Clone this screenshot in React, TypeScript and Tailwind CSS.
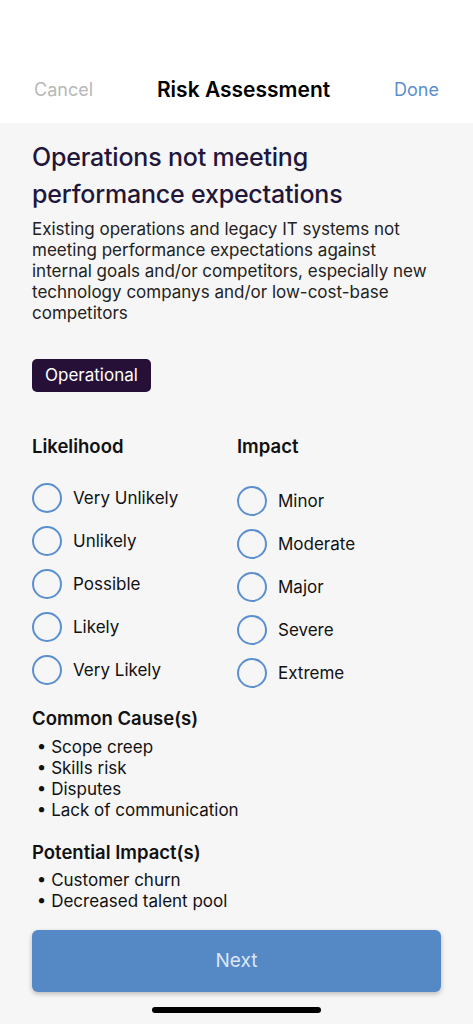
import React from "react";

const likelihood = ["Very Unlikely", "Unlikely", "Possible", "Likely", "Very Likely"];
const impact = ["Minor", "Moderate", "Major", "Severe", "Extreme"];

function Radio({ label }: { label: string }) {
  return (
    <div className="flex h-[43px] items-center gap-[11px]">
      <span className="h-[30px] w-[30px] shrink-0 rounded-full border-[2.5px] border-[#5b8fd0]" />
      <span className="text-[17px] text-[#111]">{label}</span>
    </div>
  );
}

export default function App() {
  return (
    <div
      className="relative flex h-[1024px] w-[473px] flex-col overflow-hidden bg-[#f6f6f6]"
      style={{ fontFamily: "Inter, 'Noto Sans', sans-serif" }}
    >
      <header className="flex h-[123px] items-end bg-white px-[34px] pb-[18px]">
        <div className="flex w-full items-center justify-between">
          <span className="text-[18px] text-[#b8b8b8]">Cancel</span>
          <span className="text-[21px] font-semibold text-black">Risk Assessment</span>
          <span className="text-[18px] text-[#5b8fd0]">Done</span>
        </div>
      </header>

      <main className="flex flex-col px-8 pt-[16px]">
        <h1 className="text-[25px] font-medium leading-[37px] tracking-[-0.2px] text-[#22163a]">
          Operations not meeting performance expectations
        </h1>
        <p className="mt-[6px] pr-3 text-[17px] leading-[21px] text-[#222]">
          Existing operations and legacy IT systems not meeting performance expectations against
          internal goals and/or competitors, especially new technology companys and/or
          low-cost-base competitors
        </p>
        <div className="mt-[35px]">
          <span className="inline-block rounded-[5px] bg-[#261038] px-[13px] py-[6px] text-[17px] leading-[21px] text-white">
            Operational
          </span>
        </div>

        <div className="mt-[41px] grid grid-cols-[205px_1fr]">
          <div>
            <h2 className="text-[18.5px] font-semibold text-[#111]">Likelihood</h2>
            <div className="mt-[16px] flex flex-col">
              {likelihood.map((l) => (
                <Radio key={l} label={l} />
              ))}
            </div>
          </div>
          <div>
            <h2 className="text-[18.5px] font-semibold text-[#111]">Impact</h2>
            <div className="mt-[19px] flex flex-col">
              {impact.map((l) => (
                <Radio key={l} label={l} />
              ))}
            </div>
          </div>
        </div>

        <h2 className="mt-[10px] text-[18.5px] font-semibold text-[#111]">Common Cause(s)</h2>
        <ul className="mt-[4px] text-[17px] leading-[21px] text-[#111]">
          {["Scope creep", "Skills risk", "Disputes", "Lack of communication"].map((t) => (
            <li key={t}>&nbsp;• {t}</li>
          ))}
        </ul>

        <h2 className="mt-[18px] text-[18.5px] font-semibold text-[#111]">Potential Impact(s)</h2>
        <ul className="mt-[4px] text-[17px] leading-[21px] text-[#111]">
          {["Customer churn", "Decreased talent pool"].map((t) => (
            <li key={t}>&nbsp;• {t}</li>
          ))}
        </ul>
      </main>

      <div className="absolute bottom-[32px] left-8 right-8 flex h-[62px] items-center justify-center rounded-[6px] bg-[#5589c6] text-[19px] text-[#dce7f4] shadow-[0_2px_5px_rgba(0,0,0,0.25)]">
        Next
      </div>
      <div className="absolute bottom-[11px] left-[152px] h-[6px] w-[169px] rounded-full bg-black" />
    </div>
  );
}
